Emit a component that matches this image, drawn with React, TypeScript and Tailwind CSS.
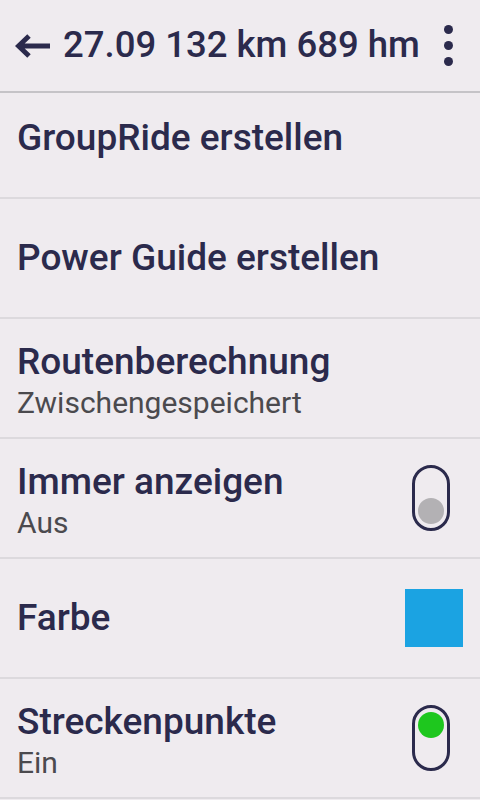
import React from "react";

const Toggle = ({ on }: { on: boolean }) => (
  <div
    className={`w-[38px] h-[66px] rounded-full border-[3px] border-[#2b2a4c] flex flex-col items-center px-[3px] py-[4px] ${
      on ? "justify-start" : "justify-end"
    }`}
  >
    <div className={`w-[26px] h-[26px] rounded-full ${on ? "bg-[#1ec71e]" : "bg-[#b3b1b4]"}`} />
  </div>
);

const Row = ({
  title,
  sub,
  right,
  first,
}: {
  title: string;
  sub?: string;
  right?: React.ReactNode;
  first?: boolean;
}) => (
  <div
    className={`flex items-center justify-between pl-[17px] pr-[17px] border-b-2 border-[#dcd9dd] ${
      first ? "h-[106px] pb-[14px]" : "h-[120px]"
    }`}
  >
    <div className={`flex flex-col ${sub ? "pt-[5px]" : ""}`}>
      <div className="text-[37px] leading-[44px] font-medium text-[#2b2a4c]">{title}</div>
      {sub && <div className="text-[30px] leading-[38px] text-[#4b4a4e]">{sub}</div>}
    </div>
    {right}
  </div>
);

export default function App() {
  return (
    <div
      className="w-[480px] h-[800px] bg-[#efebef] overflow-hidden"
      style={{ fontFamily: "Roboto, 'Noto Sans', sans-serif" }}
    >
      <div className="h-[93px] border-b-2 border-[#c5c3c7] flex items-center pl-[15px] pr-[27px]">
        <svg width="36" height="24" viewBox="0 0 36 24" className="mr-[12px]">
          <path
            d="M35 12 H4 M14 2 L3.5 12 L14 22"
            stroke="#2b2a4c"
            strokeWidth="5"
            fill="none"
            strokeLinejoin="miter"
          />
        </svg>
        <div className="text-[36.5px] font-medium text-[#2b2a4c] leading-none flex-1 whitespace-nowrap">27.09 132 km 689 hm</div>
        <div className="flex flex-col items-center gap-[7px]">
          <div className="w-[9px] h-[9px] rounded-full bg-[#2b2a4c]" />
          <div className="w-[9px] h-[9px] rounded-full bg-[#2b2a4c]" />
          <div className="w-[9px] h-[9px] rounded-full bg-[#2b2a4c]" />
        </div>
      </div>
      <Row first title="GroupRide erstellen" />
      <Row title="Power Guide erstellen" />
      <Row title="Routenberechnung" sub="Zwischengespeichert" />
      <Row title="Immer anzeigen" sub="Aus" right={<div className="mr-[13px]"><Toggle on={false} /></div>} />
      <Row title="Farbe" right={<div className="w-[58px] h-[58px] bg-[#1ba3e2]" />} />
      <Row title="Streckenpunkte" sub="Ein" right={<div className="mr-[13px]"><Toggle on={true} /></div>} />
    </div>
  );
}
